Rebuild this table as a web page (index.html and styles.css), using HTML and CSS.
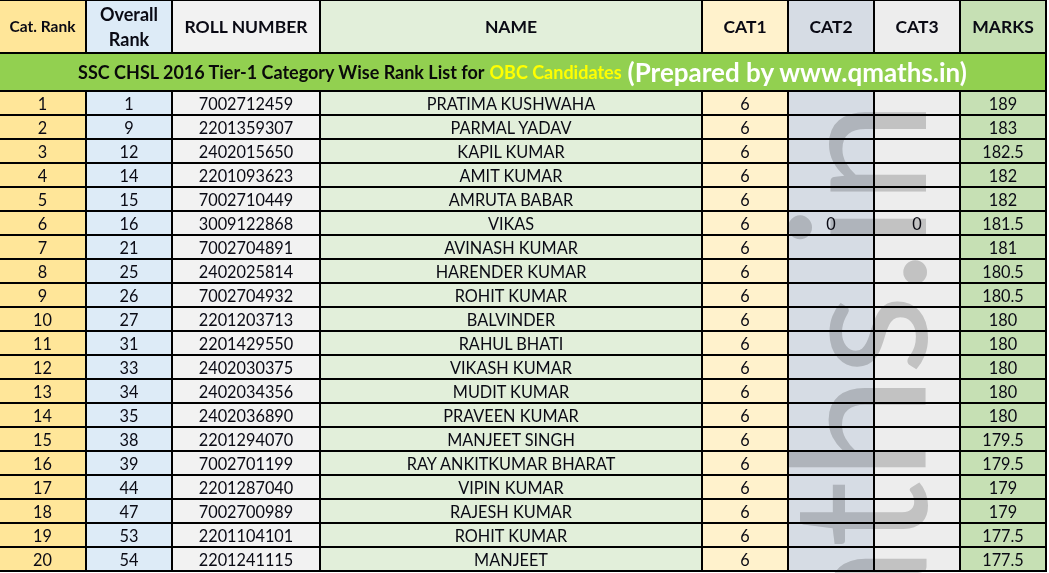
FILE: index.html
```html
<!DOCTYPE html>
<html>
<head>
<meta charset="utf-8">
<link rel="stylesheet" href="styles.css">
</head>
<body>
<div class="page">
  <div class="sheet">
    <div class="c c1 hd small">Cat. Rank</div>
    <div class="c c2 hd two">Overall<br>Rank</div>
    <div class="c c3 hd">ROLL NUMBER</div>
    <div class="c c4 hd">NAME</div>
    <div class="c c5 hd">CAT1</div>
    <div class="c c6 hd">CAT2</div>
    <div class="c c7 hd">CAT3</div>
    <div class="c c8 hd">MARKS</div>

    <div class="c title"><span class="t-main">SSC CHSL 2016 Tier-1 Category Wise Rank List for</span><span class="t-obc">OBC Candidates</span><span class="t-by">(Prepared by www.qmaths.in)</span></div>

    <div class="c c1">1</div><div class="c c2">1</div><div class="c c3">7002712459</div><div class="c c4">PRATIMA KUSHWAHA</div><div class="c c5">6</div><div class="c c6"></div><div class="c c7"></div><div class="c c8">189</div>
    <div class="c c1">2</div><div class="c c2">9</div><div class="c c3">2201359307</div><div class="c c4">PARMAL YADAV</div><div class="c c5">6</div><div class="c c6"></div><div class="c c7"></div><div class="c c8">183</div>
    <div class="c c1">3</div><div class="c c2">12</div><div class="c c3">2402015650</div><div class="c c4">KAPIL KUMAR</div><div class="c c5">6</div><div class="c c6"></div><div class="c c7"></div><div class="c c8">182.5</div>
    <div class="c c1">4</div><div class="c c2">14</div><div class="c c3">2201093623</div><div class="c c4">AMIT KUMAR</div><div class="c c5">6</div><div class="c c6"></div><div class="c c7"></div><div class="c c8">182</div>
    <div class="c c1">5</div><div class="c c2">15</div><div class="c c3">7002710449</div><div class="c c4">AMRUTA BABAR</div><div class="c c5">6</div><div class="c c6"></div><div class="c c7"></div><div class="c c8">182</div>
    <div class="c c1">6</div><div class="c c2">16</div><div class="c c3">3009122868</div><div class="c c4">VIKAS</div><div class="c c5">6</div><div class="c c6">0</div><div class="c c7">0</div><div class="c c8">181.5</div>
    <div class="c c1">7</div><div class="c c2">21</div><div class="c c3">7002704891</div><div class="c c4">AVINASH KUMAR</div><div class="c c5">6</div><div class="c c6"></div><div class="c c7"></div><div class="c c8">181</div>
    <div class="c c1">8</div><div class="c c2">25</div><div class="c c3">2402025814</div><div class="c c4">HARENDER KUMAR</div><div class="c c5">6</div><div class="c c6"></div><div class="c c7"></div><div class="c c8">180.5</div>
    <div class="c c1">9</div><div class="c c2">26</div><div class="c c3">7002704932</div><div class="c c4">ROHIT KUMAR</div><div class="c c5">6</div><div class="c c6"></div><div class="c c7"></div><div class="c c8">180.5</div>
    <div class="c c1">10</div><div class="c c2">27</div><div class="c c3">2201203713</div><div class="c c4">BALVINDER</div><div class="c c5">6</div><div class="c c6"></div><div class="c c7"></div><div class="c c8">180</div>
    <div class="c c1">11</div><div class="c c2">31</div><div class="c c3">2201429550</div><div class="c c4">RAHUL BHATI</div><div class="c c5">6</div><div class="c c6"></div><div class="c c7"></div><div class="c c8">180</div>
    <div class="c c1">12</div><div class="c c2">33</div><div class="c c3">2402030375</div><div class="c c4">VIKASH KUMAR</div><div class="c c5">6</div><div class="c c6"></div><div class="c c7"></div><div class="c c8">180</div>
    <div class="c c1">13</div><div class="c c2">34</div><div class="c c3">2402034356</div><div class="c c4">MUDIT KUMAR</div><div class="c c5">6</div><div class="c c6"></div><div class="c c7"></div><div class="c c8">180</div>
    <div class="c c1">14</div><div class="c c2">35</div><div class="c c3">2402036890</div><div class="c c4">PRAVEEN KUMAR</div><div class="c c5">6</div><div class="c c6"></div><div class="c c7"></div><div class="c c8">180</div>
    <div class="c c1">15</div><div class="c c2">38</div><div class="c c3">2201294070</div><div class="c c4">MANJEET SINGH</div><div class="c c5">6</div><div class="c c6"></div><div class="c c7"></div><div class="c c8">179.5</div>
    <div class="c c1">16</div><div class="c c2">39</div><div class="c c3">7002701199</div><div class="c c4">RAY ANKITKUMAR BHARAT</div><div class="c c5">6</div><div class="c c6"></div><div class="c c7"></div><div class="c c8">179.5</div>
    <div class="c c1">17</div><div class="c c2">44</div><div class="c c3">2201287040</div><div class="c c4">VIPIN KUMAR</div><div class="c c5">6</div><div class="c c6"></div><div class="c c7"></div><div class="c c8">179</div>
    <div class="c c1">18</div><div class="c c2">47</div><div class="c c3">7002700989</div><div class="c c4">RAJESH KUMAR</div><div class="c c5">6</div><div class="c c6"></div><div class="c c7"></div><div class="c c8">179</div>
    <div class="c c1">19</div><div class="c c2">53</div><div class="c c3">2201104101</div><div class="c c4">ROHIT KUMAR</div><div class="c c5">6</div><div class="c c6"></div><div class="c c7"></div><div class="c c8">177.5</div>
    <div class="c c1">20</div><div class="c c2">54</div><div class="c c3">2201241115</div><div class="c c4">MANJEET</div><div class="c c5">6</div><div class="c c6"></div><div class="c c7"></div><div class="c c8">177.5</div>
  </div>
  <div class="watermark">qmaths.in</div>
</div>
</body>
</html>
```

FILE: styles.css
```css
html, body {
  margin: 0;
  padding: 0;
  background: #ffffff;
}

.page {
  position: relative;
  width: 1049px;
  height: 573px;
  overflow: hidden;
  font-family: Lato, "Liberation Sans", sans-serif;
  color: #0a0a14;
}

.sheet {
  display: grid;
  grid-template-columns: 85px 84px 146px 380px 84px 84px 84px 84px;
  grid-template-rows: 51px 36px repeat(20, 22px);
  gap: 2px;
  padding: 1px 2px 2px 0;
  width: max-content;
  background: #000000;
}

.c {
  display: flex;
  align-items: center;
  justify-content: center;
  padding-top: 2px;
  font-size: 16.3px;
  line-height: 1;
  white-space: nowrap;
  overflow: hidden;
}

.c1 { background: #ffe699; }
.c2 { background: #ddebf7; }
.c3 { background: #f2f2f2; }
.c4 { background: #e2efda; }
.c5 { background: #fff2cc; }
.c6 { background: #d6dce4; }
.c7 { background: #ededed; }
.c8 { background: #c6e0b4; }

.hd {
  padding-top: 0;
  font-weight: 700;
  font-size: 17.5px;
}

.hd.small {
  font-size: 15.5px;
}

.hd.two {
  text-align: center;
  line-height: 25px;
  font-size: 18px;
}

.title {
  grid-column: 1 / -1;
  padding-top: 0;
  background: #92d050;
  font-weight: 700;
  font-size: 18px;
  align-items: center;
}

.t-main {
  color: #0a0a0a;
}

.t-obc {
  color: #ffff00;
  margin-left: 5px;
}

.t-by {
  color: #ffffff;
  font-size: 26px;
  margin-left: 6px;
}

.watermark {
  position: absolute;
  left: 759px;
  top: 900px;
  width: 1200px;
  height: 188px;
  transform-origin: 0 0;
  transform: rotate(-90deg);
  font-family: Lato, "Liberation Sans", sans-serif;
  font-size: 188px;
  line-height: 188px;
  color: #d1d1d1;
  mix-blend-mode: multiply;
  white-space: nowrap;
  pointer-events: none;
}
```
